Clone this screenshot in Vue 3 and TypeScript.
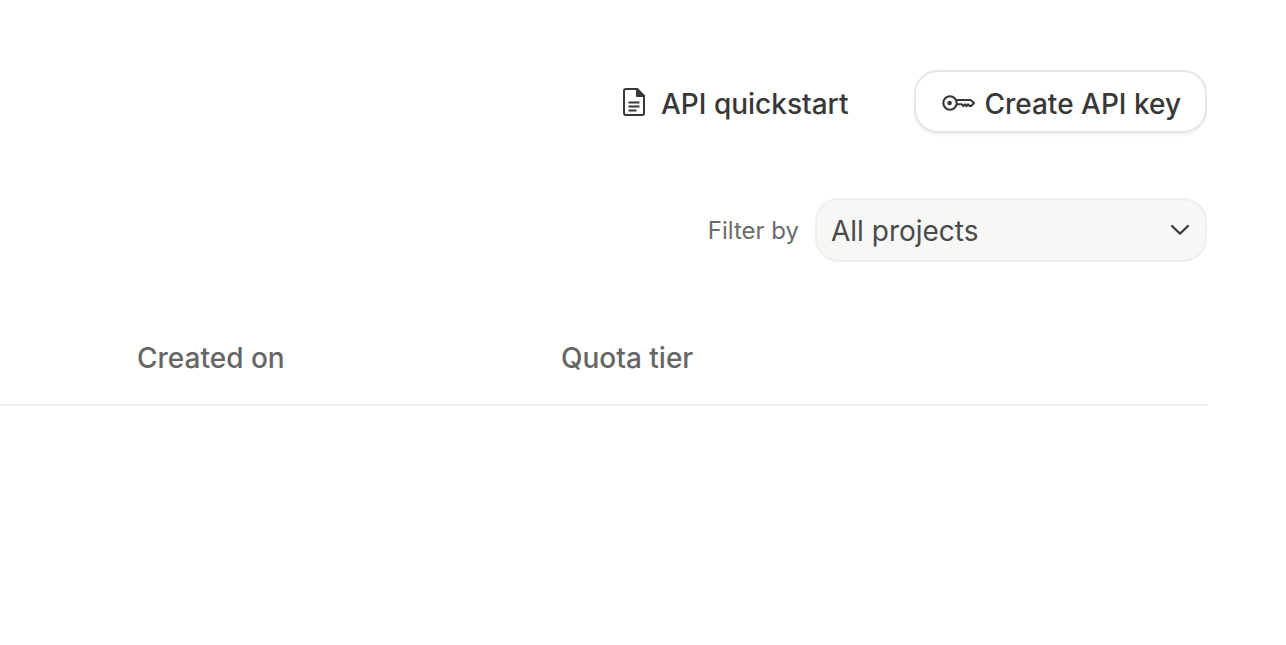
<script setup lang="ts">
const columns = ['Created on', 'Quota tier']
</script>

<template>
  <div class="page">
    <div class="actions">
      <a class="link-btn">
        <svg width="24" height="30" viewBox="0 0 24 30" fill="none" stroke="#383838" stroke-width="2">
          <path d="M4 2h11l7 7v17a2 2 0 0 1-2 2H4a2 2 0 0 1-2-2V4a2 2 0 0 1 2-2z" stroke-linejoin="round" />
          <path d="M15 2v7h7z" fill="#383838" stroke-linejoin="round" />
          <path d="M6.5 15.5h11M6.5 19.5h11M6.5 23.5h8" stroke-width="1.8" />
        </svg>
        <span class="label">API quickstart</span>
      </a>
      <button class="create-btn">
        <svg class="key" width="33" height="18" viewBox="0 0 33 18" fill="none" stroke="#383838" stroke-width="2.1">
          <circle cx="8" cy="9" r="6.7" />
          <circle cx="7.6" cy="9" r="2.3" fill="#383838" stroke="none" />
          <path d="M14.4 6H28.5L32 9l-2.6 2.9h-2l-1.4-1.6-1.6 1.9-1.5-1.9-1.5 1.9-1.5-1.9h-5.5" stroke-linejoin="round" />
        </svg>
        <span class="label">Create API key</span>
      </button>
    </div>

    <div class="filter-row">
      <span class="filter-label">Filter by</span>
      <div class="select">
        <span class="select-text">All projects</span>
        <svg width="20" height="12" viewBox="0 0 20 12" fill="none" stroke="#3c3c3c" stroke-width="2.2">
          <path d="M2 2l8 7.6L18 2" stroke-linecap="round" stroke-linejoin="round" />
        </svg>
      </div>
    </div>

    <div class="table-head">
      <div v-for="col in columns" :key="col" class="col">{{ col }}</div>
    </div>
  </div>
</template>

<style>
html,
body {
  background: #fff;
}
</style>

<style scoped>
.page {
  width: 1207px;
  height: 645px;
  overflow: hidden;
  font-family: Inter, "Liberation Sans", sans-serif;
  color: #383838;
}

.actions {
  display: flex;
  justify-content: flex-end;
  align-items: center;
  gap: 66px;
  padding-top: 70px;
}

.label {
  margin-top: 4px;
}

.link-btn {
  display: flex;
  align-items: center;
  gap: 15px;
  font-size: 28px;
  font-weight: 500;
  color: #383838;
}

.create-btn {
  display: flex;
  align-items: center;
  gap: 9px;
  height: 63px;
  padding: 0 24px 0 26px;
  font: inherit;
  font-size: 28px;
  font-weight: 500;
  color: #383838;
  background: #fff;
  border: 2px solid #e6e6e6;
  border-radius: 24px;
  box-shadow: 0 2px 3px rgba(0, 0, 0, 0.06);
}

.key {
  margin-top: 2px;
}

.filter-row {
  display: flex;
  justify-content: flex-end;
  align-items: center;
  gap: 16px;
  margin-top: 65px;
}

.filter-label {
  font-size: 24px;
  color: #6b6b6b;
}

.select {
  display: flex;
  align-items: center;
  justify-content: space-between;
  width: 392px;
  height: 64px;
  box-sizing: border-box;
  padding: 0 15px 0 14px;
  font-size: 28px;
  color: #4a4a4a;
  background: #f7f7f6;
  border: 2px solid #eeeeee;
  border-radius: 24px;
}

.select-text {
  margin-top: 2px;
}

.table-head {
  display: flex;
  margin-top: 64px;
  height: 78px;
  padding-left: 137px;
  border-bottom: 2px solid #eeeeee;
  font-size: 28px;
  font-weight: 500;
  color: #666666;
}

.col {
  width: 424px;
  padding-top: 15px;
}
</style>
